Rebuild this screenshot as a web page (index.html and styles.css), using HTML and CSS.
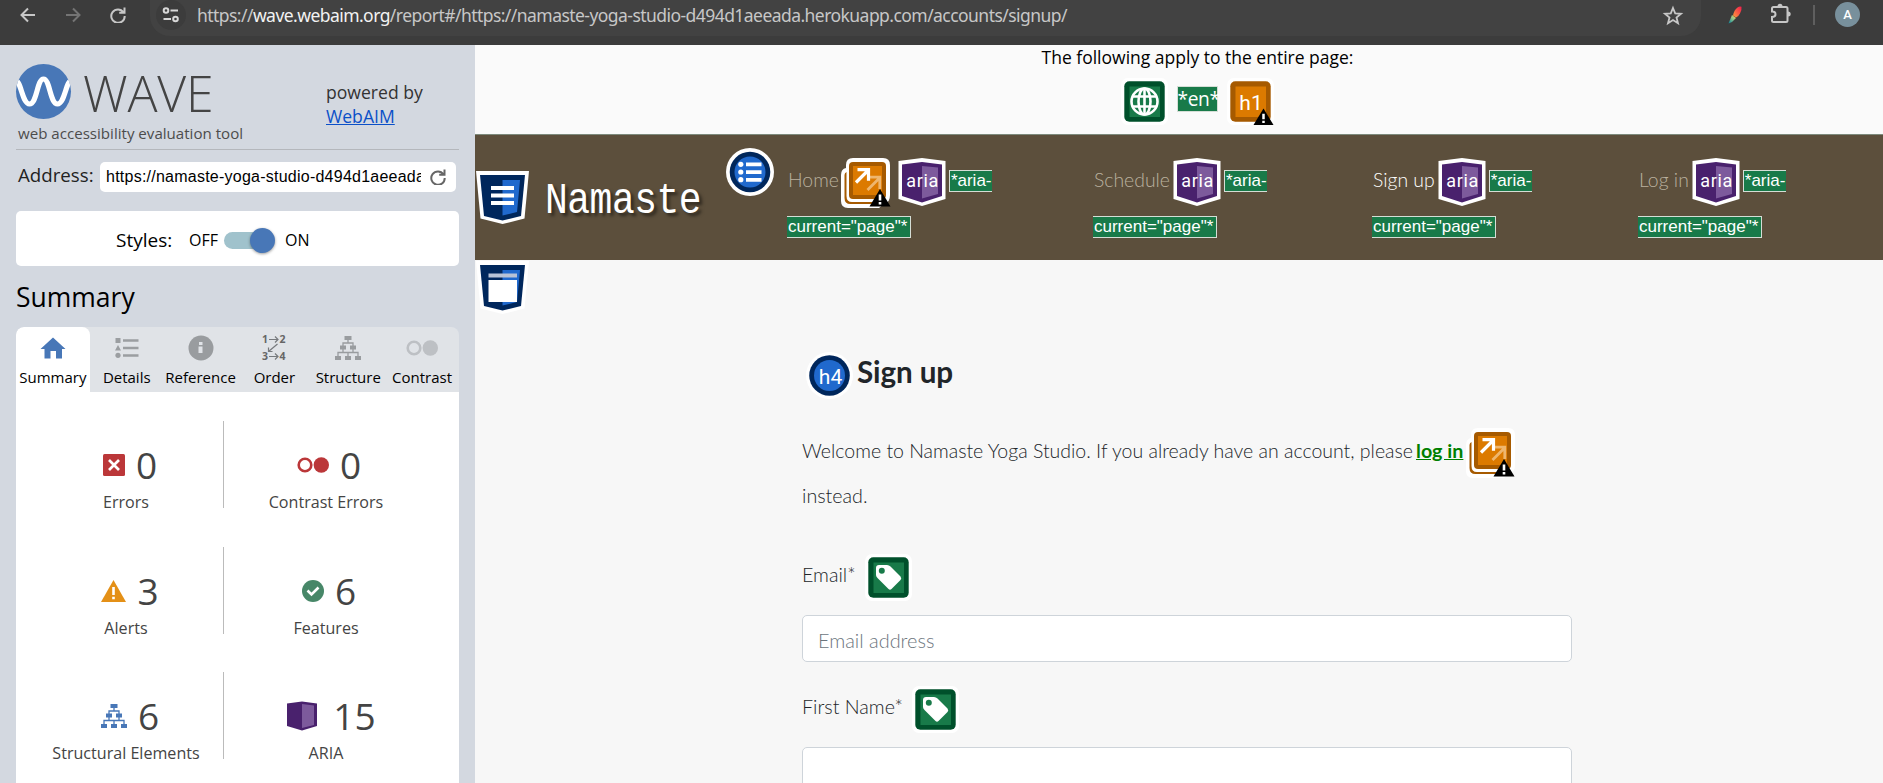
FILE: index.html
```html
<!DOCTYPE html>
<html lang="en">
<head>
<meta charset="utf-8">
<title>WAVE Report of Sign up</title>
<link rel="stylesheet" href="styles.css">
</head>
<body>
<svg class="defs" aria-hidden="true">
  <defs>
    <symbol id="caution" viewBox="0 0 22 19"><path d="M11 1 21.5 18.5H.5z" fill="#000"/><path d="M9.7 6.5h2.6v6H9.7zM9.7 14h2.6v2.4H9.7z" fill="#fff"/></symbol>
    <symbol id="redundant" viewBox="0 0 49 50">
      <path d="M12 0h30q7 0 7 7v30q0 7-5 8l-6 5H7q-7 0-7-7V17q0-6 5-7V7q0-7 7-7z" fill="#fff"/>
      <path d="M5.5 14q-2 1-2 3v23q0 6 6 6h24q3 0 4-2H11q-5.500 0-5.500-6z" fill="#a65a00"/>
      <rect x="8" y="4" width="37" height="37" rx="4" fill="#a65a00"/><rect x="12" y="8" width="29" height="29" fill="#dc7a00"/>
      <g fill="none" stroke-width="2.800"><path d="m26.500 32 11.500-11.500M29 19.200H38.800V31" stroke="#eeb66e"/><path d="M15 24.500 27 12.500M16.500 11.700h11v11" stroke="#fff" stroke-width="3.200"/></g>
    </symbol>
    <symbol id="aria" viewBox="0 0 48 48"><path d="M24 0 47.500 3V41L24 48 .5 41V3z" fill="#fff"/><path d="M24 4 44 6.500V38L24 44.500 4 38V6.500z" fill="#49216d"/><path d="M24 8 40 9.500V36L24 40.500z" fill="#7d5a9c"/><text x="24.300" y="29" text-anchor="middle" textLength="32" class="badge-text">aria</text></symbol>
    <symbol id="label" viewBox="0 0 47 47"><rect width="47" height="47" rx="7" fill="#fff"/><rect x="3.300" y="3.300" width="40.400" height="40.400" rx="5" fill="#00502b"/><rect x="8.500" y="8.500" width="30.500" height="30.500" fill="#187a49"/><path d="M11 14q0-3 3-3h8q2 0 3.500 1.500l10 10q1.500 2 0 3.500l-9 9q-1.500 1.500-3 0l-11-11q-1.500-1.500-1.500-3z" fill="#fff"/><circle cx="16.800" cy="16.800" r="3" fill="#187a49"/></symbol>
    <symbol id="tree" viewBox="0 0 26 24"><path d="M9.500 0h7v4h-7zM5 9.500h6v4H5zM15 9.500h6v4h-6zM0 20h6v4H0zM10 20h6v4h-6zM20 20h6v4h-6z" fill="currentColor"/><path d="M13 4v3M8 10V7h10v3M8 13v3.500M18 13v3.500M3 20v-3.500h20V20M13 16.500V20" fill="none" stroke="currentColor" stroke-width="1.300"/></symbol>
    <symbol id="circles" viewBox="0 0 32 16"><circle cx="8" cy="8" r="6.300" fill="none" stroke="currentColor" stroke-width="2.600"/><circle cx="24.300" cy="8" r="7.700" fill="currentColor"/></symbol>
    <symbol id="reload" viewBox="0 0 16 16"><path d="M13.500 5.300A6.700 6.700 0 1 0 14.700 9M14.500.5v5.300H9.200" fill="none" stroke="currentColor" stroke-width="2"/></symbol>
  </defs>
</svg>

<header class="browser">
  <svg class="back" width="16" height="16" viewBox="0 0 16 16"><path d="M15 8H2M8 1.500 1.500 8 8 14.500"/></svg>
  <svg class="forward" width="16" height="16" viewBox="0 0 16 16"><path d="M1 8h13M8 1.500 14.500 8 8 14.500"/></svg>
  <svg class="refresh" width="16" height="16"><use href="#reload"/></svg>
  <div class="omnibox">
    <span class="site-info"><svg width="18" height="16" viewBox="0 0 18 16" fill="none" stroke="#d8d8d8" stroke-width="2"><circle cx="4" cy="3.500" r="2.300"/><path d="M8.500 3.500H16M1.500 12H9"/><circle cx="13.500" cy="12" r="2.300"/></svg></span>
    <span class="url">https://<b>wave.webaim.org</b>/report#/https://namaste-yoga-studio-d494d1aeeada.herokuapp.com/accounts/signup/</span>
    <svg class="star" width="20" height="19" viewBox="0 0 20 19"><path d="m10 2 2.200 5.400 5.800.4-4.500 3.700 1.500 5.700-5-3.200-5 3.200 1.500-5.700L2 7.800l5.800-.4z"/></svg>
  </div>
  <svg class="brush" width="14" height="18" viewBox="0 0 14 18"><defs><linearGradient id="tail" x1="0" y1="1" x2="1" y2="0"><stop offset="0" stop-color="#007f9c"/><stop offset=".55" stop-color="#8cc48c"/><stop offset="1" stop-color="#ffd257"/></linearGradient><linearGradient id="head" x1="0" y1="1" x2="1" y2="0"><stop offset="0" stop-color="#ff9d3c"/><stop offset="1" stop-color="#f3194d"/></linearGradient></defs><path d="M.5 17.500 4 9l4 3-4 4z" fill="url(#tail)"/><path d="M5 9.500Q6 4 9.500 1.500 11.500 0 13.500.7 14 4 12 7.500q-1.500 3-4 4z" fill="url(#head)"/></svg>
  <svg class="puzzle" width="22" height="21" viewBox="0 0 22 21"><path d="M3.500 4h12.500q1.500 0 1.500 1.500V17.500q0 1.500-1.500 1.500H3.500Q2 19 2 17.500V14q3.500 0 3.500-2.800T2 8.500v-3Q2 4 3.500 4z" fill="none" stroke="#c7c7c7" stroke-width="2"/><path d="M7.500 3.500a2.500 2.700 0 0 1 5 0zM18 8.500a2.700 2.500 0 0 1 0 5z" fill="#c7c7c7"/></svg>
  <span class="separator"></span>
  <span class="avatar">A</span>
</header>

<div class="workspace">
  <aside class="sidebar">
    <div class="brand">
      <div>
        <div class="logo">
          <svg width="55" height="55" viewBox="0 0 55 55"><defs><clipPath id="disc"><circle cx="27.500" cy="27.500" r="27.500"/></clipPath></defs><circle cx="27.500" cy="27.500" r="27.500" fill="#4877b7"/><path clip-path="url(#disc)" d="M-1 17C5 15 6 40 13.500 40S21 15 27.500 15 34 40 41.500 40 50 15 56 17" fill="none" stroke="#fff" stroke-width="5.200"/></svg>
          <span class="wordmark">WAVE</span>
        </div>
        <div class="tagline">web accessibility evaluation tool</div>
      </div>
      <div class="powered">powered by<br><a href="#">WebAIM</a></div>
    </div>
    <div class="address"><span class="address-label">Address:</span><div class="address-box"><span class="address-text">https://namaste-yoga-studio-d494d1aeeada</span><svg width="16" height="16"><use href="#reload"/></svg></div></div>
    <div class="styles-box"><span class="styles-label">Styles:</span><span class="off">OFF</span><span class="toggle"><i></i></span><span class="on">ON</span></div>
    <h2 class="heading">Summary</h2>
    <nav class="tabs">
      <div class="tab active"><svg width="26" height="22" viewBox="0 0 26 22"><path d="M13 .5 25.500 12H22v9.500h-6V14h-5.500v7.500h-6V12H.5z" fill="#4877b7"/></svg><span>Summary</span></div>
      <div class="tab"><svg width="24" height="20" viewBox="0 0 24 20" fill="#9b9ea1"><path d="M.5 0h5v5h-5zM3 7l3 5.500H0zM8 1.300h15.500v2.400H8zM8 8.800h15.500v2.400H8zM8 16.300h15.500v2.400H8z"/><circle cx="3" cy="17.300" r="2.600"/></svg><span>Details</span></div>
      <div class="tab"><svg width="26" height="26" viewBox="0 0 26 26"><circle cx="13" cy="13" r="12.500" fill="#999c9f"/><path d="M11 7h3.500v3H11zM10.500 11.500h4V18h-4z" fill="#e0e3e7"/></svg><span>Reference</span></div>
      <div class="tab"><svg width="24" height="26" viewBox="0 0 24 26"><g class="order-text"><text x="0" y="8">1</text><text x="17.500" y="8">2</text><text x="0" y="25">3</text><text x="17.500" y="25">4</text></g><path d="M7 4.500h9m-3-3 3 3-3 3M7 21.500h9m-3-3 3 3-3 3M15.500 9 6.500 16.500m0-4v4h4" fill="none" stroke="#777a7d" stroke-width="1.200"/></svg><span>Order</span></div>
      <div class="tab"><svg class="gray" width="26" height="24"><use href="#tree"/></svg><span>Structure</span></div>
      <div class="tab"><svg class="pale" width="32" height="16"><use href="#circles"/></svg><span>Contrast</span></div>
    </nav>
    <div class="panel">
      <div class="stat"><div class="count"><svg width="22" height="22" viewBox="0 0 22 22"><rect width="22" height="22" rx="1.500" fill="#bb3739"/><path d="m6 6 10 10M16 6 6 16" stroke="#fff" stroke-width="2.700"/></svg>0</div><div class="caption">Errors</div></div>
      <div class="stat"><div class="count"><svg class="red" width="32" height="16"><use href="#circles"/></svg>0</div><div class="caption">Contrast Errors</div></div>
      <div class="stat"><div class="count"><svg width="25" height="22" viewBox="0 0 25 22"><path d="M12.500 0 25 22H0z" fill="#e49017"/><path d="M11.200 7h2.600v8h-2.600zM11.200 16.800h2.600v2.500h-2.600z" fill="#fff"/></svg>3</div><div class="caption">Alerts</div></div>
      <div class="stat"><div class="count"><svg width="22" height="22" viewBox="0 0 22 22"><circle cx="11" cy="11" r="11" fill="#478768"/><path d="m5.500 10.500 4 4 7-7" fill="none" stroke="#fff" stroke-width="2.600"/></svg>6</div><div class="caption">Features</div></div>
      <div class="stat"><div class="count"><svg class="blue" width="26" height="24"><use href="#tree"/></svg>6</div><div class="caption">Structural Elements</div></div>
      <div class="stat"><div class="count wide"><svg width="30" height="30" viewBox="0 0 30 30"><path d="M15 .5 30 2.500V25L15 29.500 0 25V2.500z" fill="#49216d"/><path d="m15 3 12 1.500V24l-12 3z" fill="#7d5a9c"/></svg>15</div><div class="caption">ARIA</div></div>
    </div>
  </aside>

  <main class="page">
    <section class="global">
      <div class="global-title">The following apply to the entire page:</div>
      <div class="global-icons">
        <svg width="47" height="47" viewBox="0 0 47 47"><rect width="47" height="47" rx="7" fill="#fff"/><rect x="3.300" y="3.300" width="40.400" height="40.400" rx="5" fill="#00502b"/><rect x="8.500" y="8.500" width="30.500" height="30.500" fill="#187a49"/><g fill="none" stroke="#fff" stroke-width="2.600"><circle cx="23.500" cy="23.500" r="13"/><ellipse cx="23.500" cy="23.500" rx="6" ry="13"/><path d="M23.500 10v27M12 18.500h23M12 28.500h23"/></g></svg>
        <span class="code en">*en*</span>
        <svg width="50" height="47" viewBox="0 0 50 47"><rect width="47" height="47" rx="7" fill="#fff"/><rect x="3.300" y="3.300" width="40.400" height="40.400" rx="5" fill="#a65a00"/><rect x="8.500" y="8.500" width="30.500" height="30.500" fill="#dc7a00"/><text x="24" y="32" text-anchor="middle" class="badge-text h">h1</text><use href="#caution" x="26" y="29" width="21" height="19"/></svg>
      </div>
    </section>

    <div class="navbar">
      <svg class="landmark" width="53" height="53" viewBox="0 0 53 53"><path d="M0 0h53l-4.500 47.500L26.500 53 4.500 47.500z" fill="#fff"/><path d="M4 4h45l-4 41-18.500 4.500L8 45z" fill="#00275c"/><path d="M26.500 9H44l-3 32-14.500 3.500z" fill="#2069cd"/><path d="M15 15h23v4H15zM15 22.500h23v4H15zM15 30h23v4H15z" fill="#fff"/></svg>
      <span class="site-name">Namaste</span>
      <svg class="list-badge" width="48" height="48" viewBox="0 0 48 48"><circle cx="24" cy="24" r="24" fill="#fff"/><circle cx="24" cy="24" r="20.300" fill="#00275c"/><circle cx="24" cy="24" r="15.500" fill="#2069cd"/><path d="M20 14.500h15.500v3.700H20zM20 22.200h15.500v3.700H20zM20 30h15.500v3.700H20z" fill="#fff"/><g fill="#fff"><circle cx="14.800" cy="16.300" r="2.600"/><circle cx="14.800" cy="24" r="2.600"/><circle cx="14.800" cy="31.700" r="2.600"/></g></svg>
      <ul class="links">
        <li><div class="row"><a>Home</a><svg class="dup" width="50" height="50" viewBox="0 0 50 50"><use href="#redundant" width="49" height="50"/><use href="#caution" x="28" y="30" width="22" height="19"/></svg><svg width="48" height="48"><use href="#aria"/></svg><span class="code first">*aria-</span></div><span class="code second">current="page"*</span></li>
        <li><div class="row"><a>Schedule</a><svg width="48" height="48"><use href="#aria"/></svg><span class="code first">*aria-</span></div><span class="code second">current="page"*</span></li>
        <li><div class="row"><a class="current">Sign up</a><svg width="48" height="48"><use href="#aria"/></svg><span class="code first">*aria-</span></div><span class="code second">current="page"*</span></li>
        <li><div class="row"><a>Log in</a><svg width="48" height="48"><use href="#aria"/></svg><span class="code first">*aria-</span></div><span class="code second">current="page"*</span></li>
      </ul>
    </div>

    <section class="content">
      <svg class="main-badge" width="53" height="53" viewBox="0 0 53 53"><path d="M0 0h53l-4.500 47.500L26.500 53 4.500 47.500z" fill="#fff"/><path d="M4 4h45l-4 41-18.500 4.500L8 45z" fill="#00275c"/><path d="M26.500 9H44l-3 32-14.500 3.500z" fill="#2069cd"/><path d="M12.500 12.500H41v4H12.500z" fill="#b8c3d6"/><path d="M12.500 19H41v22H12.500z" fill="#fff"/></svg>
      <form class="signup">
        <h4 class="title"><svg width="47" height="47" viewBox="0 0 47 47"><circle cx="23.500" cy="23.500" r="23.500" fill="#fff"/><circle cx="23.500" cy="23.500" r="20.300" fill="#00275c"/><circle cx="23.500" cy="23.500" r="15.500" fill="#2069cd"/><text x="24.500" y="32" text-anchor="middle" class="badge-text h">h4</text></svg><span>Sign up</span></h4>
        <div class="intro"><span class="welcome">Welcome to Namaste Yoga Studio. If you already have an account, please</span><a class="login-link">log in</a><svg width="50" height="50" viewBox="0 0 50 50"><use href="#redundant" width="49" height="50"/><use href="#caution" x="27" y="30" width="22" height="19"/></svg></div>
        <div class="intro-end">instead.</div>
        <label class="field-label"><span>Email*</span><svg width="47" height="47"><use href="#label"/></svg></label>
        <input class="field" type="text" placeholder="Email address">
        <label class="field-label"><span>First Name*</span><svg width="47" height="47"><use href="#label"/></svg></label>
        <input class="field" type="text">
      </form>
    </section>
  </main>
</div>
</body>
</html>
```

FILE: styles.css
```css
* { box-sizing: border-box; }
body { margin: 0; width: 1883px; height: 783px; overflow: hidden; font-family: "Open Sans", sans-serif; color: #000; background: #f7f7f7; }
svg { display: block; flex: none; overflow: visible; }
span, a { white-space: nowrap; }
.defs { position: absolute; width: 0; height: 0; }

/* Browser toolbar */
.browser { height: 45px; background: #3c3c3c; display: flex; align-items: flex-start; padding: 0 0 0 20px; }
.browser > svg { fill: none; stroke: #c7c7c7; stroke-width: 2; margin-top: 7px; }
.browser .forward { stroke: #747474; margin-left: 29px; }
.browser .refresh { color: #c7c7c7; stroke: none; margin-left: 29px; }
.omnibox { display: flex; align-items: center; width: 1551px; height: 36px; margin-left: 24px; padding: 0 18px 6px 6px; border-radius: 0 0 20px 20px; background: #424242; }
.site-info { display: flex; align-items: center; justify-content: center; width: 30px; height: 30px; border-radius: 50%; background: #3c3c3c; }
.url { flex: 1; margin-left: 11px; font-family: "Noto Sans", sans-serif; font-size: 17.500px; line-height: 30px; letter-spacing: -.55px; color: #c7c7c7; padding-top: 0; }
.url b { font-weight: 400; color: #f2f2f2; }
.star { fill: none; stroke: #c7c7c7; stroke-width: 1.800; margin-top: 1px; }
.browser > .brush { stroke: none; margin: 6px 0 0 27px; }
.browser > .puzzle { stroke: none; margin: 3px 0 0 28px; }
.separator { width: 2px; height: 20px; background: #5f5f5f; margin: 5px 0 0 21px; }
.avatar { width: 25px; height: 25px; margin: 2px 0 0 20px; border-radius: 50%; background: #78909c; color: #fff; font: 500 13px/25px Roboto, sans-serif; text-align: center; }

.workspace { display: grid; grid-template-columns: 475px 1408px; height: 738px; }

/* Report sidebar */
.sidebar { background: #d3d8e0; padding: 19px 16px 0; display: flex; flex-direction: column; }
.brand { display: flex; justify-content: space-between; height: 86px; border-bottom: 1px solid #b4b7bc; flex: none; }
.logo { display: flex; height: 59px; }
.wordmark { margin: 4px 0 0 12px; font-size: 50px; line-height: 50px; font-weight: 300; color: #444; letter-spacing: -.2px; }
.tagline { margin-left: 2px; font-size: 15.100px; line-height: 20px; color: #4c4c4c; white-space: nowrap; }
.powered { width: 133px; padding-top: 16px; font-size: 17.600px; line-height: 24px; color: #333; }
.powered a { color: #0b50c8; }
.address { display: flex; height: 30px; margin: 12px 0 0 2px; flex: none; }
.address-label { width: 82px; font-size: 18.700px; line-height: 26px; color: #222; }
.address-box { display: flex; align-items: center; width: 356px; border-radius: 5px; background: #fff; padding: 0 10px 0 6px; color: #666; }
.address-text { width: 315px; overflow: hidden; font: 16px/28px "Liberation Sans", sans-serif; letter-spacing: .24px; color: #000; margin-right: 9px; }
.styles-box { display: flex; align-items: center; flex: none; height: 55px; margin-top: 19px; padding: 2px 0 0 100px; border-radius: 5px; background: #fff; }
.styles-label { width: 73px; font-size: 19px; }
.off, .on { font-size: 16px; }
.off { width: 35px; }
.toggle { width: 48px; height: 17px; margin: 1px 13px 0 0; border-radius: 9px; background: #a0c2cc; display: flex; justify-content: flex-end; align-items: center; }
.toggle i { width: 25px; height: 25px; flex: none; border-radius: 50%; background: #4877b7; box-shadow: 0 1px 3px rgba(0,0,0,.4); margin-right: -3px; }
.heading { margin: 11px 0 10px; font-size: 26.500px; line-height: 40px; font-weight: 400; flex: none; }
.tabs { display: grid; grid-template-columns: repeat(6, 1fr); flex: none; height: 65px; border-radius: 8px 8px 0 0; background: #e0e3e7; overflow: hidden; }
.tab { display: flex; flex-direction: column; align-items: center; justify-content: space-between; height: 65px; }
.tab.active { background: #fff; border-radius: 8px 8px 0 0; }
.tab svg { margin: auto 0; transform: translateY(1px); }
.tab span { font-size: 15px; line-height: 22px; margin-bottom: 4px; }
.gray { color: #999c9f; }
.pale { color: #bdc0c4; }
.red { color: #bb3739; }
.blue { color: #4877b7; }
.order-text { font: 700 10.500px "Open Sans", sans-serif; fill: #666; }
.panel { flex: 1; display: grid; grid-template-columns: 195px 204px; grid-auto-rows: 87px; row-gap: 38.500px; align-content: start; padding: 29px 31px 0 13px; background: #fff; }
.stat { display: flex; flex-direction: column; align-items: center; padding-top: 22px; }
.stat:nth-child(odd) { border-right: 1px solid #bbb; }
.stat:nth-child(even) .count { padding-left: 6px; }
.count { display: flex; align-items: center; gap: 11px; height: 44px; padding-left: 8px; font-size: 37px; line-height: 44px; color: #444; }
.stat:nth-child(even) .count.wide { gap: 16px; padding-left: 11px; }
.caption { font-size: 16.100px; line-height: 24px; color: #444; margin-top: 3px; white-space: nowrap; }

/* Evaluated page */
.page { display: flex; flex-direction: column; overflow: hidden; }
.global { height: 89px; flex: none; background: #fafafa; padding: 0 0 0 37px; display: flex; flex-direction: column; align-items: center; }
.global-title { font-size: 17.500px; line-height: 24px; }
.global-icons { display: flex; align-items: center; margin: 9px 0 0 2px; }
.code { display: inline-block; font-family: "Liberation Sans", sans-serif; background: #187a49; color: #fff; border: 1px solid #d5ded6; }
.en { font: 19.200px/24px "Open Sans", sans-serif; margin: -5px 9px 0; width: 41px; letter-spacing: -.4px; }
.badge-text { font: 18px Roboto, sans-serif; fill: #fff; }
.badge-text.h { font-size: 21px; }
.navbar { display: flex; flex: none; height: 126px; border-top: 1px solid #7d8a7c; background: #5c4f3c; padding-left: 1px; }
.landmark { margin-top: 36px; }
.site-name { width: 162px; margin: 44px 0 0 16px; font: 38px/44px "Liberation Mono", monospace; letter-spacing: -.5px; color: #fff; text-shadow: 3px 3px 3px rgba(0,0,0,.5); transform: scaleY(1.180); height: 44px; }
.list-badge { margin: 13px 0 0 19px; }
.links { display: grid; grid-template-columns: 306px 279px 266px 240px; list-style: none; margin: 23px 0 0 13px; padding: 0; }
.row { display: flex; height: 50px; }
.row a { font: 300 19.400px/44px Lato, sans-serif; color: #bab19f; margin: 0 3px 0 1px; }
.row a.current { color: #fff; }
.dup { margin: 0 7px 0 -1px; }
.code.first { height: 22px; font-size: 17px; line-height: 20px; margin: 12px 0 0 3px; border-right: 0; padding-left: 1px; width: 43px; }
.code.second { height: 22px; font-size: 17px; line-height: 20px; margin-top: 8px; border-left: 0; padding-left: 1px; width: 124px; }
.content { display: grid; grid-template-columns: 53px 770px; column-gap: 273px; padding-left: 1px; }
.main-badge { margin-top: 1px; }
.signup { padding-top: 92px; }
.title { display: flex; height: 47px; margin: 0 0 0 4px; font: 700 29.600px/39px Lato, sans-serif; color: #212529; }
.title span { margin: 0 0 0 4px; letter-spacing: -.1px; }
.intro { display: flex; height: 49px; margin-top: 29px; font: 300 19.500px/45px Lato, sans-serif; color: #212529; }
.login-link { margin: 0 4px 0 3px; font-weight: 700; font-size: 19.700px; color: green; text-decoration: underline; }
.intro svg { margin-left: -1px; }
.intro-end { font: 300 19.700px/45px Lato, sans-serif; color: #212529; margin-top: -4px; }
.field-label { display: flex; gap: 9px; height: 61px; font: 300 19.700px/41px Lato, sans-serif; color: #212529; margin-top: 36px; }
.field { display: block; width: 770px; height: 47px; padding: 2px 15px 0; border: 1px solid #ced4da; border-radius: 5px; background: #fff; font: 300 19.900px/43px Lato, sans-serif; color: #212529; }
.field::placeholder { color: #6c757d; opacity: 1; }
.field + .field-label { margin-top: 24px; }
```
